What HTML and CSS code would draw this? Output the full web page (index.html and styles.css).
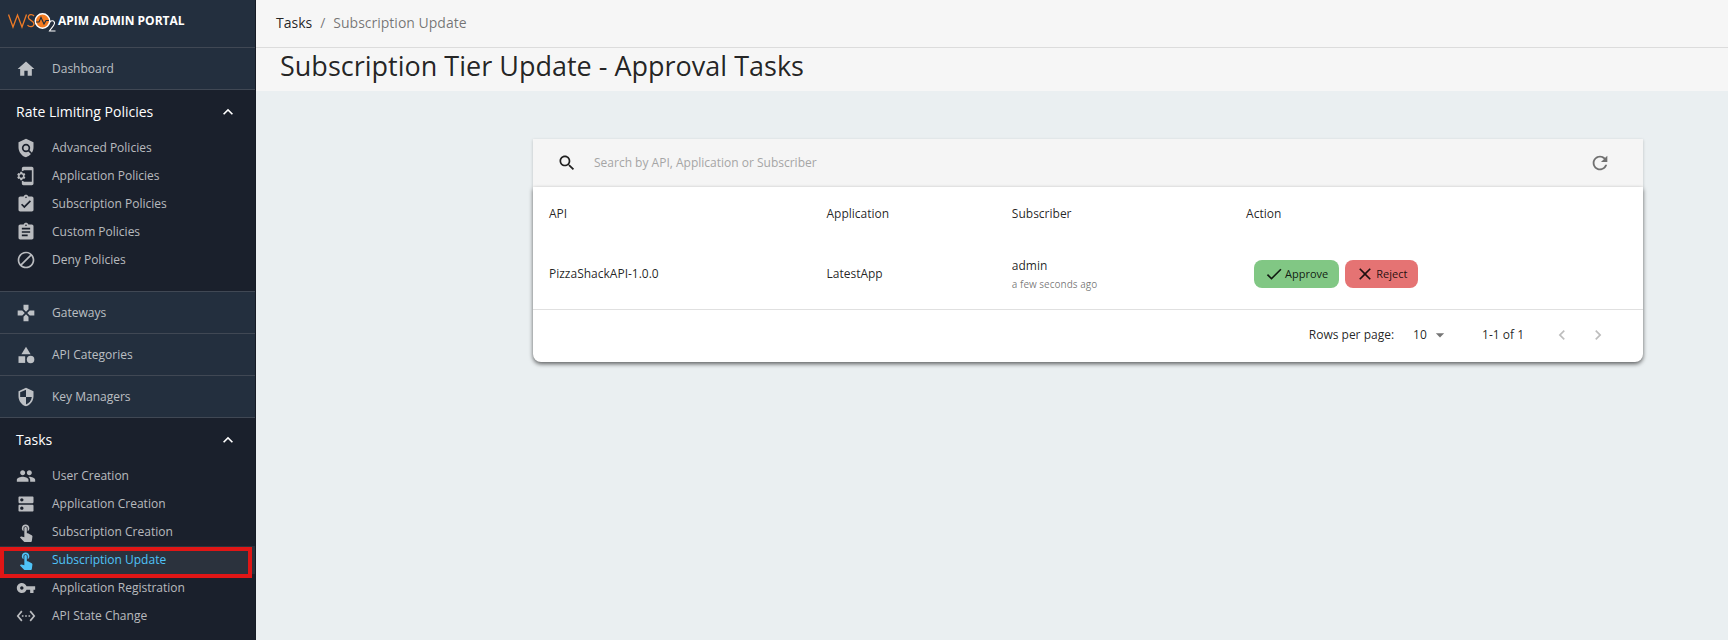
FILE: index.html
```html
<!DOCTYPE html>
<html lang="en">
<head>
<meta charset="utf-8">
<title>APIM Admin Portal - Subscription Update</title>
<link rel="stylesheet" href="styles.css">
</head>
<body>
<div class="app">
  <nav class="sidebar" aria-label="Main">
    <a class="brand" href="#">
      <svg class="logo" viewBox="0 0 48 24" aria-hidden="true">
        <path d="M0.5 5.5 5 18 9.5 6 14 18 18.500 5.500" fill="none" stroke="#ee7b26" stroke-width="1.300"/>
        <path d="M26 7C24.500 5 20.500 5 20.300 8.300 20.200 11.800 26 11 26 15 25.600 18.500 21 18.300 19.500 16" fill="none" stroke="#ee7b26" stroke-width="1.300"/>
        <circle cx="34.500" cy="12" r="7.200" fill="#f47b20" stroke="#fff" stroke-width="1.500"/>
        <path d="M28 13H31L33 8.500 36 15 38 11.500H41" fill="none" stroke="#232f3e" stroke-width="1.200"/>
        <path d="M41.500 14C42 11 47 11 46.500 14.500 46 17 43 19.500 41.500 22H47.500" fill="none" stroke="#fff" stroke-width="1.100"/>
      </svg>
      <span>APIM ADMIN PORTAL</span>
    </a>
    <a class="nav-row" href="#"><svg class="icon" viewBox="0 0 24 24"><path d="M10 20v-6h4v6h5v-8h3L12 3 2 12h3v8z"/></svg>Dashboard</a>

    <section class="group">
      <button class="group-head" type="button" aria-expanded="true">Rate Limiting Policies<svg class="icon" viewBox="0 0 24 24"><path d="M12 8l-6 6 1.410 1.410L12 10.830l4.590 4.580L18 14z"/></svg></button>
      <a class="nav-item" href="#"><svg class="icon" viewBox="0 0 24 24"><path d="M21 5l-9-4-9 4v6c0 5.550 3.840 10.740 9 12 2.300-.56 4.330-1.900 5.880-3.710l-3.120-3.120c-1.940 1.290-4.580 1.070-6.290-.64-1.950-1.950-1.950-5.120 0-7.070 1.950-1.950 5.120-1.950 7.070 0 1.710 1.710 1.920 4.350.64 6.290l2.900 2.900C20.290 15.690 21 13.380 21 11V5z"/><circle cx="12" cy="12" r="3"/></svg>Advanced Policies</a>
      <a class="nav-item" href="#"><svg class="icon" viewBox="0 0 24 24"><path d="M18.990 1.010L9 1c-1.100 0-2 .9-2 2v3h2V5h10v14H9v-1H7v3c0 1.100.9 2 2 2h9.990c1.100 0 2-.9 2-2V3c0-1.100-.9-1.990-2-1.990z"/><path fill-rule="evenodd" d="M10.040 12.490c.02-.16.040-.32.040-.49s-.01-.33-.04-.49l1.060-.83c.09-.07.12-.2.060-.31l-1-1.730c-.06-.11-.19-.15-.31-.11l-1.240.5c-.26-.2-.54-.37-.85-.49l-.19-1.320C7.560 7.090 7.450 7 7.330 7h-2c-.13 0-.24.09-.25.210l-.19 1.320c-.31.130-.59.290-.85.490l-1.240-.5c-.11-.04-.24 0-.31.110l-1 1.730c-.06.110-.04.240.060.320l1.060.820c-.02.170-.03.330-.03.500s.01.330.040.490l-1.060.83c-.09.070-.12.200-.06.310l1 1.730c.06.110.190.150.310.110l1.240-.5c.26.200.54.370.85.490l.19 1.320c.02.130.120.220.250.220h2c.12 0 .23-.09.250-.21l.19-1.320c.3-.13.590-.29.840-.49l1.250.5c.11.040.24 0 .31-.11l1-1.730c.06-.11.030-.24-.06-.31l-1.060-.84zM6.330 14c-1.100 0-2-.9-2-2s.9-2 2-2 2 .9 2 2-.9 2-2 2z"/></svg>Application Policies</a>
      <a class="nav-item" href="#"><svg class="icon" viewBox="0 0 24 24"><path d="M19 3h-4.180C14.400 1.840 13.300 1 12 1c-1.300 0-2.400.84-2.820 2H5c-1.100 0-2 .9-2 2v14c0 1.100.9 2 2 2h14c1.100 0 2-.9 2-2V5c0-1.100-.9-2-2-2zm-7 0c.55 0 1 .45 1 1s-.45 1-1 1-1-.45-1-1 .45-1 1-1zm-2 14l-4-4 1.410-1.410L10 14.170l6.590-6.590L18 9l-8 8z"/></svg>Subscription Policies</a>
      <a class="nav-item" href="#"><svg class="icon" viewBox="0 0 24 24"><path d="M19 3h-4.180C14.400 1.840 13.300 1 12 1c-1.300 0-2.400.84-2.820 2H5c-1.100 0-2 .9-2 2v14c0 1.100.9 2 2 2h14c1.100 0 2-.9 2-2V5c0-1.100-.9-2-2-2zm-7 0c.55 0 1 .45 1 1s-.45 1-1 1-1-.45-1-1 .45-1 1-1zm2 14H7v-2h7v2zm3-4H7v-2h10v2zm0-4H7V7h10v2z"/></svg>Custom Policies</a>
      <a class="nav-item" href="#"><svg class="icon" viewBox="0 0 24 24"><path d="M12 2C6.480 2 2 6.480 2 12s4.480 10 10 10 10-4.480 10-10S17.520 2 12 2zM4 12c0-4.420 3.580-8 8-8 1.850 0 3.550.63 4.900 1.690L5.690 16.900C4.630 15.550 4 13.850 4 12zm8 8c-1.850 0-3.550-.63-4.900-1.690L18.310 7.100C19.370 8.450 20 10.150 20 12c0 4.420-3.580 8-8 8z"/></svg>Deny Policies</a>
    </section>

    <a class="nav-row" href="#"><svg class="icon" viewBox="0 0 24 24"><path d="M15 7.500V2H9v5.500l3 3 3-3zM7.500 9H2v6h5.500l3-3-3-3zM9 16.500V22h6v-5.500l-3-3-3 3zM16.500 9l-3 3 3 3H22V9h-5.500z"/></svg>Gateways</a>
    <a class="nav-row" href="#"><svg class="icon" viewBox="0 0 24 24"><path d="M12 2l-5.500 9h11z"/><circle cx="17.500" cy="17.500" r="4.500"/><path d="M3 13.500h8v8H3z"/></svg>API Categories</a>
    <a class="nav-row" href="#"><svg class="icon" viewBox="0 0 24 24"><path d="M12 1L3 5v6c0 5.550 3.840 10.740 9 12 5.160-1.260 9-6.450 9-12V5l-9-4zm0 10.990h7c-.53 4.120-3.280 7.790-7 8.940V12H5V6.300l7-3.110v8.800z"/></svg>Key Managers</a>

    <section class="group">
      <button class="group-head" type="button" aria-expanded="true">Tasks<svg class="icon" viewBox="0 0 24 24"><path d="M12 8l-6 6 1.410 1.410L12 10.830l4.590 4.580L18 14z"/></svg></button>
      <a class="nav-item" href="#"><svg class="icon" viewBox="0 0 24 24"><path d="M16 11c1.660 0 2.990-1.340 2.990-3S17.660 5 16 5c-1.660 0-3 1.340-3 3s1.340 3 3 3zm-8 0c1.660 0 2.990-1.340 2.990-3S9.660 5 8 5C6.340 5 5 6.340 5 8s1.340 3 3 3zm0 2c-2.330 0-7 1.170-7 3.500V19h14v-2.500c0-2.330-4.670-3.500-7-3.500zm8 0c-.29 0-.62.020-.97.050 1.160.84 1.970 1.970 1.970 3.450V19h6v-2.500c0-2.330-4.670-3.500-7-3.500z"/></svg>User Creation</a>
      <a class="nav-item" href="#"><svg class="icon" viewBox="0 0 24 24"><path d="M20 13H4c-.55 0-1 .45-1 1v6c0 .55.450 1 1 1h16c.55 0 1-.45 1-1v-6c0-.55-.45-1-1-1zM7 19c-1.100 0-2-.9-2-2s.9-2 2-2 2 .9 2 2-.9 2-2 2zM20 3H4c-.55 0-1 .45-1 1v6c0 .55.450 1 1 1h16c.55 0 1-.45 1-1V4c0-.55-.45-1-1-1zM7 9c-1.100 0-2-.9-2-2s.9-2 2-2 2 .9 2 2-.9 2-2 2z"/></svg>Application Creation</a>
      <a class="nav-item" href="#"><svg class="icon" viewBox="0 0 24 24"><path d="M9 11.240V7.500C9 6.120 10.120 5 11.500 5S14 6.120 14 7.500v3.740c1.210-.81 2-2.180 2-3.740C16 5.010 13.990 3 11.500 3S7 5.010 7 7.500c0 1.560.79 2.930 2 3.740zm9.840 4.630l-4.540-2.260c-.17-.07-.35-.11-.54-.11H13v-6c0-.83-.67-1.500-1.500-1.500S10 6.670 10 7.500v10.740l-3.430-.72c-.08-.01-.15-.03-.24-.03-.31 0-.59.130-.79.330l-.79.800 4.940 4.940c.27.270.65.440 1.060.44h6.790c.75 0 1.330-.55 1.440-1.280l.75-5.270c.01-.07.020-.14.020-.2 0-.62-.38-1.160-.91-1.380z"/></svg>Subscription Creation</a>
      <a class="nav-item active" href="#" aria-current="page"><svg class="icon" viewBox="0 0 24 24"><path d="M9 11.240V7.500C9 6.120 10.120 5 11.500 5S14 6.120 14 7.500v3.740c1.210-.81 2-2.180 2-3.740C16 5.010 13.990 3 11.500 3S7 5.010 7 7.500c0 1.560.79 2.930 2 3.740zm9.840 4.630l-4.540-2.260c-.17-.07-.35-.11-.54-.11H13v-6c0-.83-.67-1.500-1.500-1.500S10 6.670 10 7.500v10.740l-3.430-.72c-.08-.01-.15-.03-.24-.03-.31 0-.59.130-.79.330l-.79.800 4.940 4.940c.27.270.65.440 1.060.44h6.790c.75 0 1.330-.55 1.440-1.280l.75-5.270c.01-.07.020-.14.020-.2 0-.62-.38-1.160-.91-1.380z"/></svg>Subscription Update</a>
      <a class="nav-item" href="#"><svg class="icon" viewBox="0 0 24 24"><path d="M12.650 10C11.830 7.670 9.610 6 7 6c-3.310 0-6 2.690-6 6s2.690 6 6 6c2.610 0 4.830-1.670 5.650-4H17v4h4v-4h2v-4H12.650zM7 14c-1.100 0-2-.9-2-2s.9-2 2-2 2 .9 2 2-.9 2-2 2z"/></svg>Application Registration</a>
      <a class="nav-item" href="#"><svg class="icon" viewBox="0 0 24 24"><path d="M7.770 6.760L6.230 5.480.820 12l5.410 6.520 1.540-1.280L3.420 12l4.350-5.240zM7 13h2v-2H7v2zm10-2h-2v2h2v-2zm-6 2h2v-2h-2v2zm6.770-7.520l-1.540 1.280L20.580 12l-4.350 5.240 1.540 1.280L23.180 12l-5.410-6.520z"/></svg>API State Change</a>
    </section>
  </nav>

  <main class="main">
    <nav class="crumbs" aria-label="Breadcrumb"><a href="#">Tasks</a><span>/</span><span>Subscription Update</span></nav>
    <h1 class="title">Subscription Tier Update - Approval Tasks</h1>
    <div class="content">
      <div class="toolbar">
        <svg class="icon dark" viewBox="0 0 24 24" aria-hidden="true"><path d="M15.500 14h-.79l-.28-.27C15.410 12.590 16 11.110 16 9.500 16 5.910 13.090 3 9.500 3S3 5.910 3 9.500 5.910 16 9.500 16c1.610 0 3.090-.59 4.230-1.570l.27.280v.79l5 4.990L20.490 19l-4.990-5zm-6 0C7.010 14 5 11.990 5 9.500S7.010 5 9.500 5 14 7.010 14 9.500 11.990 14 9.500 14z"/></svg>
        <input class="search" type="text" aria-label="Search" placeholder="Search by API, Application or Subscriber">
        <button class="icon-btn" type="button" aria-label="Reload"><svg class="icon reload" viewBox="0 0 24 24"><path d="M17.650 6.350C16.200 4.900 14.210 4 12 4c-4.420 0-7.990 3.580-7.990 8s3.570 8 7.990 8c3.730 0 6.840-2.550 7.730-6h-2.080c-.82 2.330-3.040 4-5.650 4-3.310 0-6-2.690-6-6s2.690-6 6-6c1.660 0 3.140.69 4.220 1.780L13 11h7V4l-2.350 2.350z"/></svg></button>
      </div>
      <div class="card">
        <table class="table">
          <thead><tr><th class="c-api">API</th><th class="c-app">Application</th><th class="c-sub">Subscriber</th><th>Action</th></tr></thead>
          <tbody><tr>
            <td>PizzaShackAPI-1.0.0</td>
            <td>LatestApp</td>
            <td>admin<span class="when">a few seconds ago</span></td>
            <td><div class="actions">
              <button class="btn approve" type="button"><svg class="icon" viewBox="0 0 24 24"><path d="M9 16.170L4.830 12l-1.420 1.410L9 19 21 7l-1.410-1.410z"/></svg>Approve</button>
              <button class="btn reject" type="button"><svg class="icon" viewBox="0 0 24 24"><path d="M19 6.410L17.590 5 12 10.590 6.410 5 5 6.410 10.590 12 5 17.590 6.410 19 12 13.410 17.590 19 19 17.590 13.410 12z"/></svg>Reject</button>
            </div></td>
          </tr></tbody>
        </table>
        <div class="pager">
          <label for="rows">Rows per page:</label>
          <span class="select-wrap"><select id="rows" class="select"><option>10</option><option>25</option><option>100</option></select><svg class="icon caret" viewBox="0 0 24 24" aria-hidden="true"><path d="M7 10l5 5 5-5z"/></svg></span>
          <span class="range">1-1 of 1</span>
          <button class="icon-btn" type="button" aria-label="Previous page" disabled><svg class="icon" viewBox="0 0 24 24"><path d="M15.410 7.410L14 6l-6 6 6 6 1.410-1.410L10.830 12z"/></svg></button>
          <button class="icon-btn" type="button" aria-label="Next page" disabled><svg class="icon" viewBox="0 0 24 24"><path d="M10 6L8.590 7.410 13.170 12l-4.580 4.590L10 18l6-6z"/></svg></button>
        </div>
      </div>
    </div>
  </main>
</div>
</body>
</html>
```
FILE: styles.css
```css
* { box-sizing: border-box; }
body {
  margin: 0;
  font-family: "Open Sans", "Noto Sans", sans-serif;
  font-size: 12px;
  line-height: 20px;
  color: rgba(0, 0, 0, 0.87);
  background: #eaeff1;
}
a { color: inherit; text-decoration: none; }
button, input, select { font: inherit; color: inherit; border: 0; background: none; padding: 0; margin: 0; }
.icon { width: 20px; height: 20px; flex: none; fill: currentColor; display: block; }

.app { display: flex; min-height: 100vh; }

.sidebar { flex: none; width: 256px; background: #1a202c; border-right: 1px solid #161b25; color: rgba(255, 255, 255, 0.7); }
.brand { display: flex; align-items: center; gap: 2px; height: 47px; padding: 0 8px 5px; background: #232f3e; color: #fff; font-size: 12px; font-weight: 700; }
.logo { width: 48px; height: 24px; }
.nav-row { display: flex; align-items: center; gap: 16px; height: 42px; padding: 0 16px; background: #232f3e; border-top: 1px solid #404854; }
.group { border-top: 1px solid #404854; padding-bottom: 17px; }
.group-head { display: flex; align-items: center; justify-content: space-between; width: 100%; height: 44px; padding: 0 17px 0 16px; color: #fff; font-size: 14px; }
.nav-item { display: flex; align-items: center; gap: 16px; height: 28px; padding: 0 16px; }
.active { color: #4fc3f7; background: #2b323d; position: relative; }
.active::after { content: ""; position: absolute; inset: 1px 3px -4px 0; border: 4px solid #e01616; }

.main { flex: 1; min-width: 0; }
.crumbs { display: flex; align-items: center; gap: 8px; height: 48px; padding: 0 20px 2px; background: #f6f6f6; border-bottom: 1px solid #dcdcdc; font-size: 14px; color: rgba(0, 0, 0, 0.54); }
.crumbs a { color: rgba(0, 0, 0, 0.87); }
.title { margin: 0; padding: 0 24px 7px; background: #f6f6f6; font-size: 27px; line-height: 36px; font-weight: 400; }

.content { padding: 48px 85px 48px 277px; }
.toolbar { display: flex; align-items: center; gap: 17px; height: 48px; padding: 0 24px; background: #f5f5f5; box-shadow: 0 1px 3px rgba(0, 0, 0, 0.2); }
.dark { color: rgba(0, 0, 0, 0.87); }
.search { flex: 1; min-width: 0; outline: 0; }
.search::placeholder { color: #a5a5a5; opacity: 1; }
.icon-btn { display: block; padding: 8px; color: rgba(0, 0, 0, 0.54); }
.icon-btn:disabled { color: rgba(0, 0, 0, 0.26); }
.reload { width: 22px; height: 22px; }

.card { position: relative; background: #fff; border-radius: 0 0 8px 8px; box-shadow: 0 2px 4px rgba(0, 0, 0, 0.6); }
.table { width: 100%; table-layout: fixed; border-collapse: collapse; }
.table th, .table td { padding: 0 16px; text-align: left; font-weight: 400; }
.table th { height: 53px; }
.table td { height: 69px; border-bottom: 1px solid #e0e0e0; }
.c-api { width: 25%; }
.c-app { width: 16.7%; }
.c-sub { width: 21.1%; }
.when { display: block; font-size: 10px; line-height: 16px; color: rgba(0, 0, 0, 0.54); }
.actions { display: flex; gap: 6px; padding-left: 8px; }
.btn { display: flex; align-items: center; gap: 1px; height: 28px; padding: 0 11px 0 10px; border-radius: 8px; font-size: 11px; }
.approve { background: #81c784; }
.reject { background: #e57373; }

.pager { display: flex; align-items: center; justify-content: flex-end; height: 52px; padding: 0 27px 2px 0; }
.select-wrap { position: relative; margin: 0 32px 0 8px; }
.select { appearance: none; width: 48px; padding-left: 11px; }
.caret { position: absolute; top: 0; right: 0; color: rgba(0, 0, 0, 0.54); pointer-events: none; }
.range { margin-right: 20px; }
```
